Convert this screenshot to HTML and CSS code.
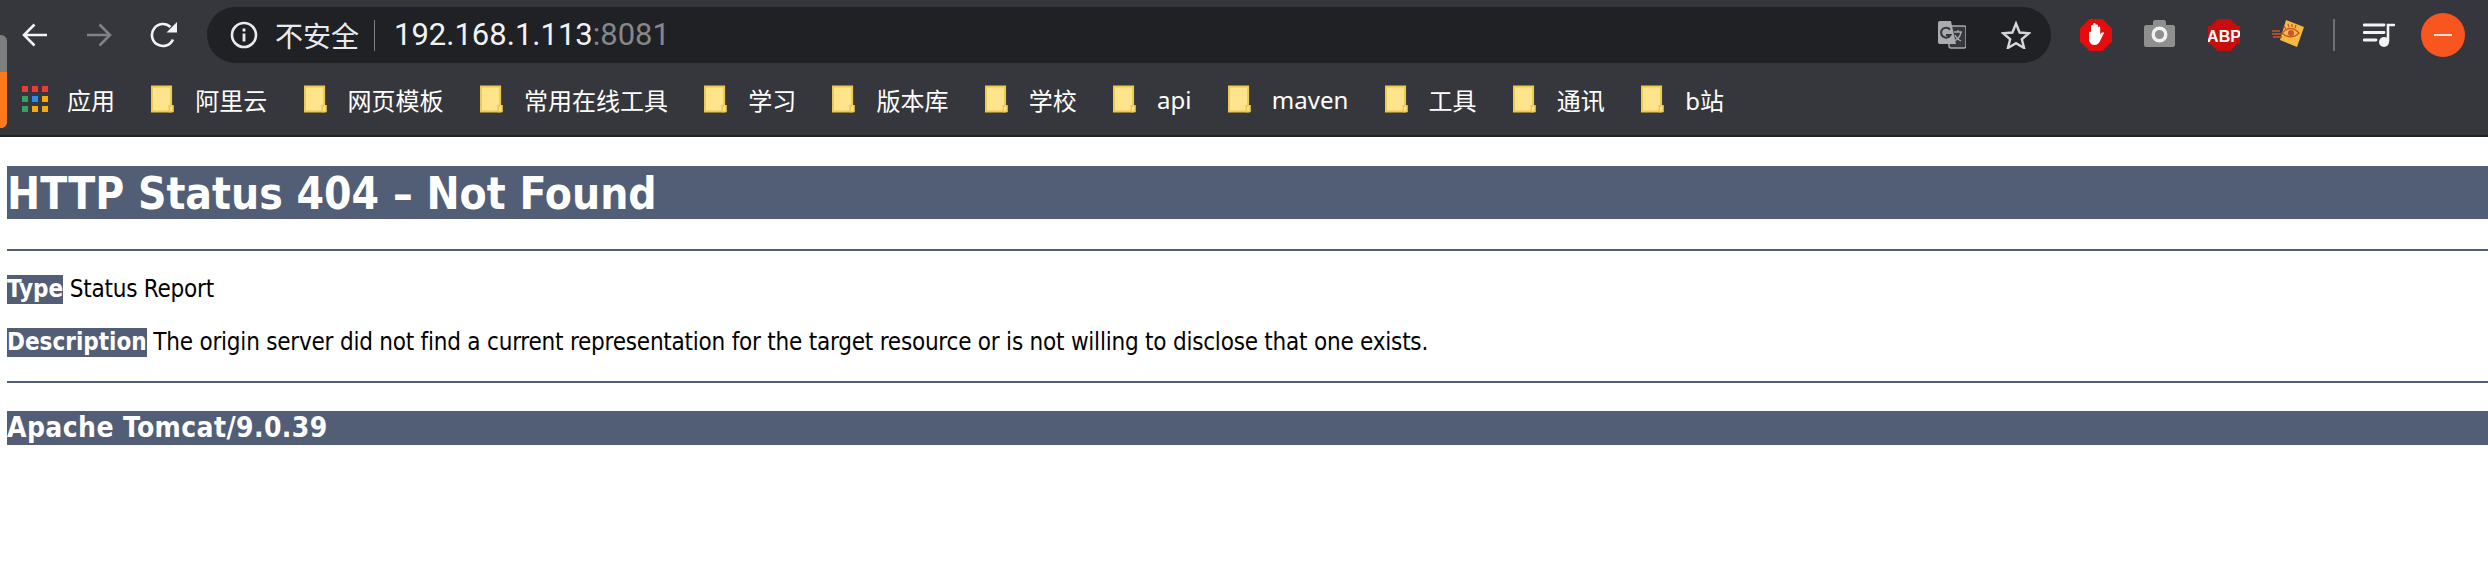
FILE: index.html
```html
<!DOCTYPE html>
<html lang="zh-CN">
<head>
<meta charset="UTF-8">
<title>HTTP Status 404 – Not Found</title>
<link rel="stylesheet" href="styles.css">
</head>
<body>
<header class="browser">
  <div class="tab-sliver"><div class="tab-sliver-fill"></div></div>
  <div class="nav-row">
    <svg class="nav-icon" viewBox="0 0 26 26"><path d="M25 13H3M12.500 2.500 2 13l10.500 10.500" fill="none" stroke="#f1f3f4" stroke-width="2.600"/></svg>
    <svg class="nav-icon" viewBox="0 0 26 26"><path d="M1 13h22M13.500 2.500 24 13 13.500 23.500" fill="none" stroke="#808285" stroke-width="2.600"/></svg>
    <svg class="nav-icon reload" viewBox="0 0 28 26"><path d="M23 17.500A11 11 0 1 1 20.500 5" fill="none" stroke="#f1f3f4" stroke-width="2.600"/><path d="M16.500 10.500H27V0Z" fill="#f1f3f4"/></svg>
    <div class="omnibox">
      <svg class="info-icon" viewBox="0 0 28 28"><circle cx="14" cy="14" r="12" fill="none" stroke="#e8eaed" stroke-width="2.600"/><rect x="12.600" y="12.500" width="2.800" height="8" fill="#e8eaed"/><rect x="12.600" y="7.500" width="2.800" height="3" fill="#e8eaed"/></svg>
      <span class="secure-label">不安全</span>
      <span class="omni-sep"></span>
      <span class="url">192.168.1.113<span class="url-port">:8081</span></span>
      <svg class="translate-icon" viewBox="0 0 28 28"><rect x="11" y="5" width="17" height="22" rx="2" fill="#36373c" stroke="#a9abae" stroke-width="1.400"/><path d="M2 0h11l5 23H2a2 2 0 0 1-2-2V2a2 2 0 0 1 2-2Z" fill="#a9abae"/><path d="M12 8.500A5 5 0 1 0 12.500 14H8" fill="none" stroke="#36373c" stroke-width="2"/><path d="M16 11h8M20 9v2M23 11c-1 5-4 8-7 9M17 14c1 3 4 5 6 6" fill="none" stroke="#a9abae" stroke-width="1.300"/></svg>
      <svg class="star-icon" viewBox="0 0 30 28"><path d="M15 2.500 18.600 11.500 28 12.200 20.800 18.300 23.100 27 15 22.200 6.900 27 9.200 18.300 2 12.200 11.400 11.500Z" fill="none" stroke="#d5d6d8" stroke-width="2.400"/></svg>
    </div>
    <div class="actions">
      <svg class="ext-icon" viewBox="0 0 32 32"><path d="M9.500 0h13L32 9.500v13L22.500 32h-13L0 22.500v-13Z" fill="#e40c0c"/><path d="M9 13.500c0-1 2-1 2 0V7c0-1.500 2.200-1.500 2.200 0V5c0-1.500 2.400-1.500 2.400 0v1.500c0-1.500 2.400-1.500 2.400 0v2c0-1.300 2.200-1.300 2.200 0v7c1-2 3.500-2.800 3.800-1.500-1.500 2.500-2.500 5.500-4 8-1 2-2.500 4-5.500 4-4 0-5.500-3-5.500-6.500Z" fill="#fff"/></svg>
    <svg class="ext-icon" viewBox="0 0 32 32"><path d="M2 6h7V3c0-1 1-2 2-2h9c1 0 2 1 2 2v3h7c1 0 2 1 2 2v18c0 1-1 2-2 2H2c-1 0-2-1-2-2V8c0-1 1-2 2-2Z" fill="#8f8f90"/><circle cx="15.500" cy="15.500" r="6.300" fill="none" stroke="#f1f1f1" stroke-width="3.400"/></svg>
    <svg class="ext-icon" viewBox="0 0 32 32"><path d="M9.500 0h13L32 9.500v13L22.500 32h-13L0 22.500v-13Z" fill="#c70d0d"/><rect y="7" width="32" height="18" fill="#c70d0d"/><text class="abp-text" x="16" y="22.500" text-anchor="middle">ABP</text></svg>
    <svg class="ext-icon" viewBox="0 0 32 32"><path d="M14 1 32 8 25 28 8 21Z" fill="#f5bb40"/><path d="M10 14c5-6 12-6 17 0-5 5-12 5-17 0Z" fill="#f5bb40" stroke="#c9562b" stroke-width="1.300"/><circle cx="19" cy="14" r="3" fill="#c9562b"/><path d="M12 7l2 3M16 5l1 3M20 5v3M24 6l-1 3M0 12h8M0 15h9M1 18h9" fill="none" stroke="#c9562b" stroke-width="1.300"/></svg>
    <span class="action-sep"></span>
    <svg class="queue-icon" viewBox="0 0 32 24"><path d="M1 2h20M1 9.500h20M1 17h12" fill="none" stroke="#f1f3f4" stroke-width="2.800" stroke-linecap="round"/><path d="M25 18V2h6" fill="none" stroke="#f1f3f4" stroke-width="2.600" stroke-linecap="round"/><circle cx="21" cy="19" r="5" fill="#f1f3f4"/></svg>
    <span class="avatar"><span class="avatar-dash"></span></span>
    </div>
  </div>
  <div class="bookmarks">
    <a class="bookmark">
      <svg class="apps-icon" viewBox="0 0 26 26">
        <rect width="6" height="6" fill="#ee3a34"/><rect x="10" width="6" height="6" fill="#ee3a34"/><rect x="20" width="6" height="6" fill="#ee3a34"/>
        <rect y="10" width="6" height="6" fill="#35a262"/><rect x="10" y="10" width="6" height="6" fill="#2b8cf0"/><rect x="20" y="10" width="6" height="6" fill="#f4a90c"/>
        <rect y="20" width="6" height="6" fill="#35a262"/><rect x="10" y="20" width="6" height="6" fill="#f4a90c"/><rect x="20" y="20" width="6" height="6" fill="#f4a90c"/>
      </svg>
      <span>应用</span>
    </a>
    <a class="bookmark"><svg class="folder" viewBox="0 0 24 28"><use href="#folder"/></svg><span>阿里云</span></a>
    <a class="bookmark"><svg class="folder" viewBox="0 0 24 28"><use href="#folder"/></svg><span>网页模板</span></a>
    <a class="bookmark"><svg class="folder" viewBox="0 0 24 28"><use href="#folder"/></svg><span>常用在线工具</span></a>
    <a class="bookmark"><svg class="folder" viewBox="0 0 24 28"><use href="#folder"/></svg><span>学习</span></a>
    <a class="bookmark"><svg class="folder" viewBox="0 0 24 28"><use href="#folder"/></svg><span>版本库</span></a>
    <a class="bookmark"><svg class="folder" viewBox="0 0 24 28"><use href="#folder"/></svg><span>学校</span></a>
    <a class="bookmark"><svg class="folder" viewBox="0 0 24 28"><use href="#folder"/></svg><span>api</span></a>
    <a class="bookmark"><svg class="folder" viewBox="0 0 24 28"><use href="#folder"/></svg><span>maven</span></a>
    <a class="bookmark"><svg class="folder" viewBox="0 0 24 28"><use href="#folder"/></svg><span>工具</span></a>
    <a class="bookmark"><svg class="folder" viewBox="0 0 24 28"><use href="#folder"/></svg><span>通讯</span></a>
    <a class="bookmark"><svg class="folder" viewBox="0 0 24 28"><use href="#folder"/></svg><span>b站</span></a>
  </div>
</header>

<main class="error-page">
  <h1>HTTP Status 404 – Not Found</h1>
  <hr class="line">
  <p><b>Type</b> Status Report</p>
  <p><b>Description</b> The origin server did not find a current representation for the target resource or is not willing to disclose that one exists.</p>
  <hr class="line">
  <h3>Apache Tomcat/9.0.39</h3>
</main>

<svg class="defs" width="0" height="0">
  <defs>
    <g id="folder">
      <path d="M1 1h20v26H1Z" fill="#fee58d" stroke="#eec94e" stroke-width="2"/>
      <path d="M19 27v-6h4v6Z" fill="#fee58d" stroke="#eec94e" stroke-width="1.600"/>
    </g>
  </defs>
</svg>
</body>
</html>
```

FILE: styles.css
```css
html, body {
  margin: 0;
  height: 100%;
  background-color: #fff;
  overflow: hidden;
}

.browser {
  position: relative;
  height: 135px;
  background-color: #36373c;
  border-bottom: 2px solid #202124;
}

.tab-sliver {
  position: absolute;
  left: 0;
  top: 35px;
  width: 7px;
  height: 93px;
  background-color: #7d7e80;
  border-radius: 0 6px 6px 0;
  overflow: hidden;
}

.tab-sliver-fill {
  margin-top: 37px;
  height: 56px;
  background-color: #fb7a1e;
}

.nav-row {
  display: flex;
  align-items: center;
  height: 56px;
  padding: 7px 23px 8px 22px;
}

.nav-icon {
  width: 26px;
  height: 26px;
  margin-right: 38px;
}

.reload {
  width: 28px;
  margin-right: 29px;
}

.omnibox {
  flex: 1;
  display: flex;
  align-items: center;
  height: 56px;
  padding: 0 20px 0 23px;
  background-color: #202124;
  border-radius: 28px;
  font-family: "Noto Sans CJK SC", "Liberation Sans", sans-serif;
}

.info-icon {
  width: 28px;
  height: 28px;
  margin-right: 17px;
}

.secure-label {
  color: #e8eaed;
  font-size: 28px;
  width: 99px;
}

.omni-sep {
  width: 1px;
  height: 31px;
  background-color: #7c7e81;
}

.url {
  margin-left: 19px;
  color: #f1f3f4;
  font-family: "Roboto", sans-serif;
  font-size: 31px;
  line-height: 40px;
}

.url-port {
  color: #85878a;
}

.translate-icon {
  width: 28px;
  height: 28px;
  margin-left: auto;
  margin-right: 35px;
}

.star-icon {
  width: 30px;
  height: 28px;
}

.actions {
  display: flex;
  align-items: center;
  margin-left: 29px;
}

.ext-icon {
  width: 32px;
  height: 32px;
  margin-right: 32px;
}

.abp-text {
  fill: #fff;
  font-family: "Liberation Sans", sans-serif;
  font-weight: bold;
  font-size: 16px;
}

.action-sep {
  width: 2px;
  height: 32px;
  margin: 0 28px 0 -3px;
  background-color: #6f7073;
}

.queue-icon {
  width: 32px;
  height: 24px;
  margin-right: 26px;
}

.avatar {
  display: flex;
  align-items: center;
  justify-content: center;
  width: 44px;
  height: 44px;
  border-radius: 50%;
  background-color: #f9551f;
}

.avatar-dash {
  width: 18px;
  height: 2px;
  background-color: #fbe3d8;
}

.bookmarks {
  display: flex;
  align-items: center;
  gap: 36.3px;
  height: 28px;
  padding: 14px 0 0 22px;
  color: #fff;
  font-family: "Noto Sans", "Noto Sans CJK SC", sans-serif;
  font-size: 24px;
}

.bookmark {
  display: flex;
  align-items: center;
  gap: 21px;
}

.apps-icon {
  width: 26px;
  height: 26px;
  margin-right: -2px;
}

.folder {
  width: 23px;
  height: 28px;
}

.error-page {
  padding: 29px 0 0 7px;
  font-family: "DejaVu Sans Condensed", "DejaVu Sans", sans-serif;
  font-stretch: condensed;
  font-size: 24px;
  color: #000;
}

.error-page h1 {
  margin: 0;
  height: 53px;
  line-height: 55px;
  background-color: #525d76;
  color: #fff;
  font-size: 44px;
}

.line {
  height: 2px;
  margin: 30px 0 24px;
  border: 0;
  background-color: #525d76;
}

.error-page p {
  margin: 0 0 24px;
  height: 29px;
  line-height: 29px;
  letter-spacing: -0.22px;
}

.error-page b {
  display: inline-block;
  letter-spacing: 0;
  background-color: #525d76;
  color: #fff;
}

.error-page p + .line {
  margin-top: 0;
  margin-bottom: 28px;
}

.error-page h3 {
  margin: 0;
  height: 34px;
  line-height: 34px;
  letter-spacing: 0.4px;
  background-color: #525d76;
  color: #fff;
  font-size: 28px;
}

.defs {
  position: absolute;
}
```
